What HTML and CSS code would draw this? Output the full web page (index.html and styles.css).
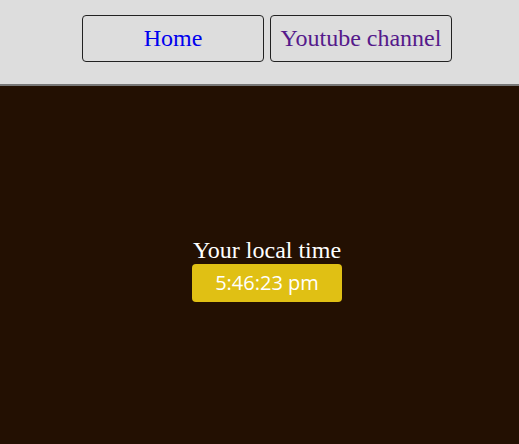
FILE: index.html
```html
<!DOCTYPE html>
<html>
<head>
<meta charset="utf-8">
<link rel="stylesheet" href="styles.css">
</head>
<body>
<header class="nav">
  <a class="nav-btn home" href="#home">Home</a>
  <a class="nav-btn yt" href="#yt">Youtube channel</a>
</header>
<main class="stage">
  <div class="clock">
    <div class="clock-title">Your local time</div>
    <div class="clock-time">5:46:23 pm</div>
  </div>
</main>
</body>
</html>
```
FILE: styles.css
```css
html, body {
  margin: 0;
  padding: 0;
  height: 100%;
}
body {
  background: #231002;
  font-family: "Liberation Serif", "Times New Roman", serif;
}
.nav {
  height: 69px;
  background: #dddddd;
  border-bottom: 2px solid #777777;
  display: flex;
  justify-content: center;
  align-items: flex-start;
  gap: 6px;
  padding: 15px 0 0 15px;
  box-sizing: content-box;
}
.nav-btn {
  width: 180px;
  height: 45px;
  border: 1px solid #222222;
  border-radius: 4px;
  display: flex;
  align-items: center;
  justify-content: center;
  font-size: 24px;
  text-decoration: none;
}
.home { color: #0000ee; }
.yt { color: #551a8b; }
.stage {
  height: calc(100% - 86px);
  display: flex;
  align-items: center;
  justify-content: center;
  padding-left: 15px;
}
.clock {
  display: flex;
  flex-direction: column;
  align-items: center;
  margin-top: 8px;
}
.clock-title {
  color: #ffffff;
  font-size: 24px;
  line-height: 27px;
}
.clock-time {
  width: 150px;
  height: 38px;
  background: #e0c014;
  border-radius: 4px;
  color: #ffffff;
  font-family: "Open Sans", sans-serif;
  font-size: 20px;
  font-stretch: 88%;
  display: flex;
  align-items: center;
  justify-content: center;
}
```
